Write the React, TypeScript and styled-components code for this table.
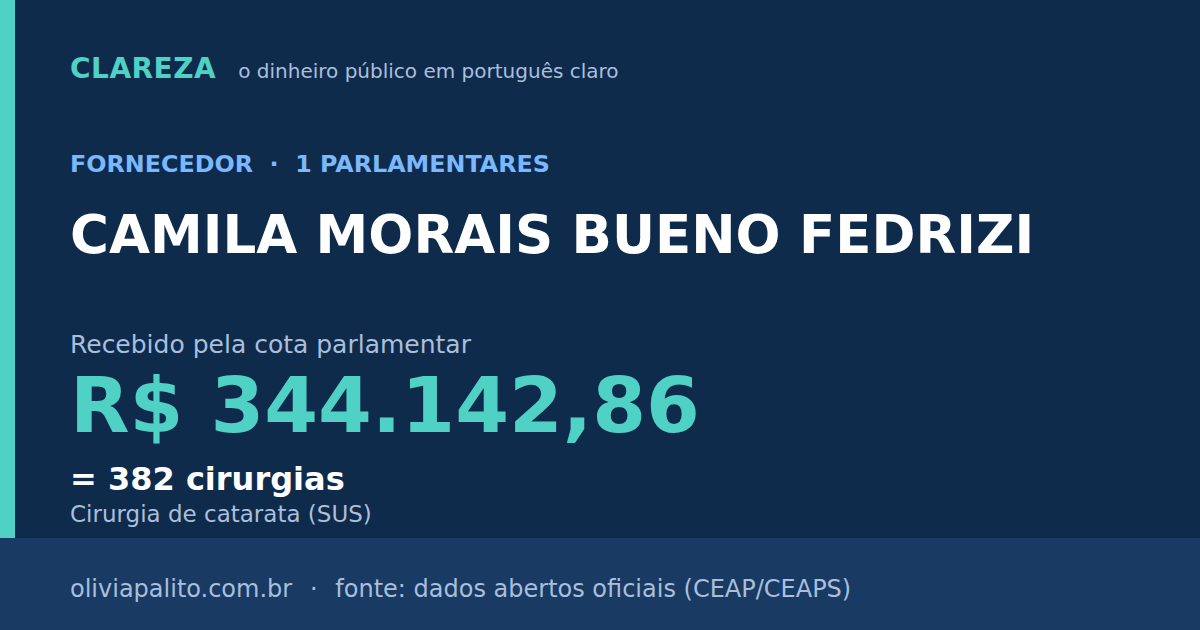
import React from 'react';
import styled, { createGlobalStyle } from 'styled-components';

const GlobalStyle = createGlobalStyle`
  html, body {
    margin: 0;
    padding: 0;
    background: #0f2b4c;
  }
  body {
    font-family: 'DejaVu Sans', 'Liberation Sans', sans-serif;
  }
`;

const Card = styled.div`
  width: 1200px;
  height: 630px;
  display: flex;
  flex-direction: column;
  background: #0f2b4c;
  overflow: hidden;
`;

const Main = styled.div`
  flex: 1;
  display: flex;
  border-left: 15px solid #4fd1c5;
`;

const Content = styled.div`
  flex: 1;
  display: flex;
  flex-direction: column;
  padding: 55px 0 0 55px;
`;

const Brand = styled.div`
  display: flex;
  align-items: baseline;
  gap: 22px;
  line-height: 1;
`;

const Logo = styled.span`
  font-size: 28px;
  font-weight: 700;
  color: #4fd1c5;
  letter-spacing: 0.5px;
`;

const Tagline = styled.span`
  font-size: 20px;
  color: #a9bfdc;
`;

const Text = styled.div<{ $size: number; $top: number; $bold?: boolean; $color: string }>`
  font-size: ${p => p.$size}px;
  font-weight: ${p => (p.$bold ? 700 : 400)};
  color: ${p => p.$color};
  margin-top: ${p => p.$top}px;
  line-height: 1;
  white-space: pre;
`;

const Footer = styled.div`
  height: 92px;
  box-sizing: border-box;
  display: flex;
  align-items: center;
  padding: 10px 0 0 70px;
  background: #183a63;
  font-size: 24px;
  line-height: 1;
  color: #a9bfdc;
  white-space: pre;
`;

const Sep = styled.span`
  margin: 0 2.5px;
`;

export default function App() {
  return (
    <>
      <GlobalStyle />
      <Card>
        <Main>
          <Content>
            <Brand>
              <Logo>CLAREZA</Logo>
              <Tagline>o dinheiro público em português claro</Tagline>
            </Brand>
            <Text $size={23.8} $top={70} $bold $color="#7ab8ff">
              {'FORNECEDOR  ·  1 PARLAMENTARES'}
            </Text>
            <Text $size={53} $top={31} $bold $color="#ffffff">
              CAMILA MORAIS BUENO FEDRIZI
            </Text>
            <Text $size={25} $top={71} $color="#a9bfdc">
              Recebido pela cota parlamentar
            </Text>
            <Text $size={77.4} $top={10} $bold $color="#4fd1c5">
              R$ 344.142,86
            </Text>
            <Text $size={32} $top={19} $bold $color="#ffffff">
              = 382 cirurgias
            </Text>
            <Text $size={23} $top={8} $color="#a9bfdc">
              Cirurgia de catarata (SUS)
            </Text>
          </Content>
        </Main>
        <Footer>
          oliviapalito.com.br<Sep>{'  ·  '}</Sep>fonte: dados abertos oficiais (CEAP/CEAPS)
        </Footer>
      </Card>
    </>
  );
}
